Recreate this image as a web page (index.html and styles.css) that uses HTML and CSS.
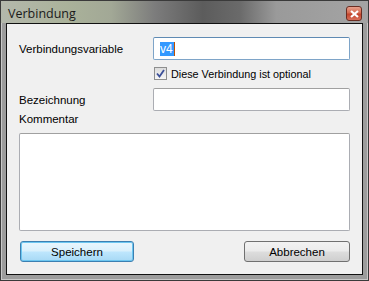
FILE: index.html
```html
<!DOCTYPE html>
<html lang="de">

<head>
    <meta charset="UTF-8">
    <title>Verbindung</title>
    <link rel="stylesheet" href="styles.css">
</head>

<body>

    <div class="window">
        <div class="titlebar">
            <span class="title">Verbindung</span>
            <div class="close-btn">
                <svg width="9" height="8" viewBox="0 0 9 8">
                    <path d="M1 1 L8 7 M8 1 L1 7" stroke="#fff" stroke-width="2.2" />
                </svg>
            </div>
        </div>

        <div class="client">
            <div class="row">
                <label class="label">Verbindungsvariable</label>
                <div class="field focused"><span class="selected">v4</span><span class="caret"></span></div>
            </div>

            <div class="check-row">
                <span class="checkbox">
                    <svg width="9" height="9" viewBox="0 0 9 9">
                        <path d="M1 4.5 L3.5 7.5 L8 1" fill="none" stroke="#3b4f99" stroke-width="1.8" />
                    </svg>
                </span>
                <span>Diese Verbindung ist optional</span>
            </div>

            <div class="row row-second">
                <label class="label">Bezeichnung</label>
                <div class="field"></div>
            </div>

            <div class="label comment-label">Kommentar</div>
            <div class="comment-box"></div>

            <div class="buttons">
                <button class="btn btn-default">Speichern</button>
                <button class="btn">Abbrechen</button>
            </div>
        </div>
    </div>

</body>

</html>
```

FILE: styles.css
```css
body {
    margin: 0;
    padding: 0;
    font-family: 'Liberation Sans', Arial, sans-serif;
    font-size: 11px;
    color: #000;
}

.window {
    width: 369px;
    height: 281px;
    box-sizing: border-box;
    border: 1px solid #3a3a3a;
    background: #9c9c9c;
    padding: 0 5px 5px 5px;
    display: flex;
    flex-direction: column;
    box-shadow: inset 0 -1px 0 #c8c8c8, inset 1px 0 0 #c8c8c8, inset -1px 0 0 #c8c8c8;
}

.titlebar {
    height: 22px;
    margin: 0 -5px;
    padding: 0 6px 0 7px;
    display: flex;
    align-items: center;
    justify-content: space-between;
    background: linear-gradient(90deg, #b4b8ac 0%, #aab29a 18%, #a2a896 30%, #7c7c7c 42%, #5c5c5c 55%, #6a6a6a 65%, #9a9a9a 75%, #a4a4a4 100%);
}

.title {
    font-family: 'Open Sans', 'Noto Sans', sans-serif;
    font-size: 12.5px;
    color: #1a1a1a;
    margin-top: 2px;
}

.close-btn {
    width: 16px;
    height: 15px;
    margin-top: 3px;
    box-sizing: border-box;
    border: 1px solid #6b2d22;
    border-radius: 3px;
    background: linear-gradient(180deg, #e8a08c 0%, #d46a50 45%, #c2442c 55%, #d8705a 100%);
    display: flex;
    align-items: center;
    justify-content: center;
}

.client {
    flex: 1;
    border: 1px solid #111;
    background: #f0f0f0;
    padding: 13px 12px 0 12px;
}

.row {
    display: flex;
    align-items: center;
    justify-content: space-between;
}

.label {
    color: #000;
    font-size: 11.5px;
}

.field {
    width: 197px;
    height: 23px;
    box-sizing: border-box;
    background: #fff;
    border: 1px solid #abadb3;
    border-top-color: #a0a0a0;
    border-radius: 2px;
    padding: 3px 6px;
    display: flex;
    align-items: center;
}

.field.focused {
    border-color: #7ea4c8;
    border-top-color: #5f8ab3;
}

.selected {
    background: #3399ff;
    color: #fff;
    font-size: 12px;
    line-height: 14px;
    padding: 0 1px 0 0;
}

.caret {
    width: 1px;
    height: 14px;
    background: #c05000;
}

.check-row {
    display: flex;
    align-items: center;
    gap: 4px;
    margin: 7px 0 0 135px;
    font-size: 10.8px;
}

.checkbox {
    width: 13px;
    height: 13px;
    box-sizing: border-box;
    border: 1px solid #8e8f8f;
    background: linear-gradient(180deg, #dcdcdc, #f6f6f6);
    display: flex;
    align-items: center;
    justify-content: center;
}

.row-second {
    margin-top: 8px;
}

.comment-label {
    margin-top: 1px;
    line-height: 14px;
}

.comment-box {
    height: 96px;
    margin-top: 7px;
    background: #fff;
    border: 1px solid #abadb3;
    border-top-color: #a0a0a0;
    border-radius: 2px;
}

.buttons {
    display: flex;
    justify-content: space-between;
    margin-top: 10px;
}

.btn {
    height: 21px;
    width: 106px;
    font-family: 'Liberation Sans', Arial, sans-serif;
    font-size: 11.5px;
    color: #000;
    border: 1px solid #707070;
    border-radius: 3px;
    background: linear-gradient(180deg, #f2f2f2 0%, #ebebeb 48%, #dddddd 52%, #cfcfcf 100%);
    padding: 0;
}

.btn-default {
    width: 114px;
    margin-left: 1px;
    border-color: #3c7fb1;
    background: linear-gradient(180deg, #eaf6fd 0%, #d9f0fc 48%, #bee6fd 52%, #a7d9f5 100%);
    box-shadow: inset 0 0 0 1px #6cc6f0;
}
```
